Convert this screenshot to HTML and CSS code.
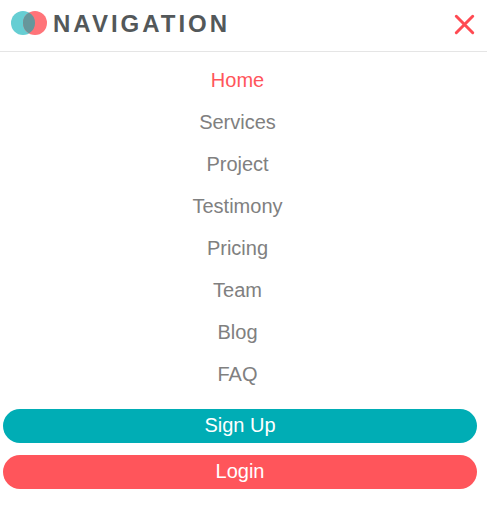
FILE: index.html
```html
<!DOCTYPE html>
<html lang="en">
<head>
<meta charset="utf-8">
<title>Navigation</title>
<link rel="stylesheet" href="styles.css">
</head>
<body>
<header class="header">
  <a class="brand" href="#">
    <svg class="logo" width="36" height="24" viewBox="0 0 36 24" aria-hidden="true">
      <circle cx="12" cy="12" r="12" fill="#66ced3"/>
      <circle cx="24" cy="12" r="12" fill="#ff7479"/>
      <path d="M18 1.6a12 12 0 0 1 0 20.8a12 12 0 0 1 0-20.8z" fill="#66979c"/>
    </svg>
    <span class="title">NAVIGATION</span>
  </a>
  <button class="close" aria-label="Close">
    <svg class="cross" width="20" height="20" viewBox="0 0 20 20"><path d="M2.3 2.3l16.4 16.4M18.7 2.3L2.3 18.7" stroke="#ff4a52" stroke-width="3" stroke-linecap="round"/></svg>
  </button>
</header>
<nav class="menu">
  <a class="link active" href="#">Home</a>
  <a class="link" href="#">Services</a>
  <a class="link" href="#">Project</a>
  <a class="link" href="#">Testimony</a>
  <a class="link" href="#">Pricing</a>
  <a class="link" href="#">Team</a>
  <a class="link" href="#">Blog</a>
  <a class="link" href="#">FAQ</a>
</nav>
<div class="actions">
  <a class="button signup" href="#">Sign Up</a>
  <a class="button login" href="#">Login</a>
</div>
</body>
</html>
```
FILE: styles.css
```css
* { box-sizing: border-box; }
body { margin: 0; background: #fff; font-family: "Liberation Sans", Arial, sans-serif; font-size: 20px; }
a { text-decoration: none; }
.header { display: flex; justify-content: space-between; height: 52px; padding: 9px 13px 0 11px; border-bottom: 1px solid #e5e5e5; }
.brand { display: flex; align-items: flex-start; gap: 6px; }
.logo { margin-top: 2px; }
.title { color: #53585a; font-size: 24px; font-weight: bold; line-height: 29px; letter-spacing: 3px; }
.close { display: flex; width: 20px; height: 20px; margin-top: 5px; padding: 0; border: 0; background: none; }
.cross { overflow: visible; }
.menu { display: flex; flex-direction: column; align-items: center; padding: 7px 12px 0 0; }
.link { height: 42px; line-height: 42px; color: #808080; }
.link.active { color: #ff555b; }
.actions { display: flex; flex-direction: column; gap: 12px; padding: 14px 10px 0 3px; }
.button { height: 34px; border-radius: 17px; color: #fff; line-height: 32px; text-align: center; }
.signup { background: #00adb5; }
.login { background: #ff555b; }
```
